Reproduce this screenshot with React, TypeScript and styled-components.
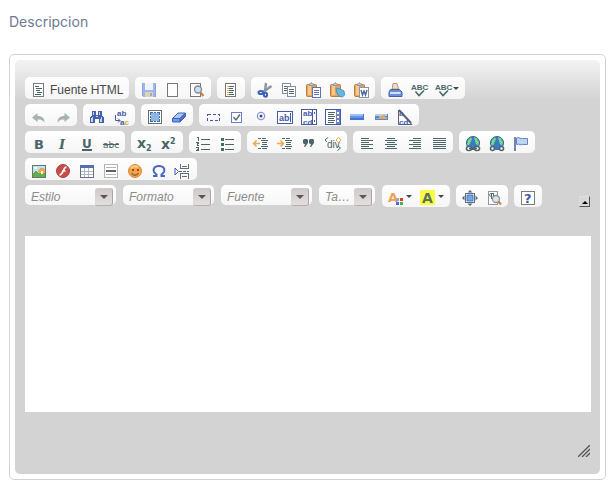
import React from "react";
import styled, { createGlobalStyle, css } from "styled-components";

const GlobalStyle = createGlobalStyle`
  * { box-sizing: border-box; }
  body {
    margin: 0;
    background: #fff;
    font-family: "Liberation Sans", Arial, sans-serif;
  }
`;

const Field = styled.div`
  padding: 12px 7px 17px 9px;
`;

const FieldLabel = styled.label`
  display: block;
  margin-bottom: 22px;
  color: #6c7b8f;
  font-family: Inter, sans-serif;
  font-size: 14px;
  line-height: 20px;
`;

const Frame = styled.div`
  padding: 5px;
  border: 1px solid #d3d3d3;
  border-radius: 5px;
`;

const Skin = styled.div`
  padding: 17px 9px 17px 10px;
  border-radius: 5px;
  background: linear-gradient(to bottom, #fff -15px, #d3d3d3 40px);
`;

const Toolbox = styled.div`
  display: flex;
  align-items: flex-end;
  justify-content: space-between;
  margin-bottom: 29px;
`;

const Rows = styled.div`
  display: flex;
  flex-direction: column;
  gap: 5px;
`;

const Row = styled.div`
  display: flex;
  flex-wrap: wrap;
  gap: 5px 6px;
`;

const Group = styled.div`
  display: flex;
  height: 22px;
  padding: 0 2px;
  border-radius: 5px;
  background: linear-gradient(to bottom, #fff, #d3d3d3 100px);
`;

const ToolButton = styled.button<{ $faded?: boolean }>`
  display: flex;
  align-items: center;
  height: 22px;
  padding: 5px 4px 1px;
  border: 0;
  background: none;
  color: #474747;
  font-family: "Liberation Sans", Arial, sans-serif;
  font-size: 12px;
  line-height: 16px;
  cursor: default;
  ${(p) =>
    p.$faded &&
    css`
      & > svg {
        opacity: 0.6;
      }
    `}
`;

const ButtonText = styled.span`
  padding-left: 3px;
  white-space: nowrap;
`;

const Glyph = styled.svg`
  display: block;
  flex: none;
  width: 16px;
  height: 16px;
  overflow: visible;
`;

const Caret = styled.svg`
  display: block;
  width: 8px;
  height: 16px;
`;

const Combo = styled.div<{ $narrow?: boolean }>`
  display: grid;
  grid-template-columns: 1fr 18px 3px;
  width: ${(p) => (p.$narrow ? 56 : 91)}px;
  height: 20px;
  margin-right: 1px;
  border-radius: 5px;
  background: linear-gradient(to bottom, #fff, #d3d3d3 100px);
`;

const ComboSelect = styled.select`
  grid-area: 1 / 1 / 2 / 4;
  width: 100%;
  height: 24px;
  padding: 0 22px 0 6px;
  border: 0;
  background: none;
  appearance: none;
  color: #8b8b8b;
  font-family: "Liberation Sans", Arial, sans-serif;
  font-size: 12px;
  font-style: italic;
  outline: none;
`;

const ComboArrow = styled.span`
  grid-area: 1 / 2;
  display: flex;
  align-items: center;
  justify-content: center;
  height: 18px;
  margin-top: 3px;
  border-right: 1px solid #aaa5a5;
  border-bottom: 1px solid #b4afaf;
  border-radius: 3px;
  background: linear-gradient(to bottom, #cfc9c9, #e3dfdf);
  pointer-events: none;
`;

const CollapseButton = styled.button`
  display: flex;
  width: 11px;
  height: 11px;
  margin-right: 1px;
  padding: 0;
  border: 1px solid #dedede;
  border-right-color: #555;
  border-bottom-color: #555;
  background: #d8d8d8;
`;

const Editor = styled.textarea`
  display: block;
  width: 100%;
  height: 176px;
  padding: 8px;
  border: 0;
  background: #fff;
  font-family: "Liberation Sans", Arial, sans-serif;
  font-size: 13px;
  resize: none;
  outline: none;
`;

const Footer = styled.div`
  display: flex;
  justify-content: flex-end;
  padding: 33px 1px 0 0;
`;

const Resizer = styled.svg`
  display: block;
  width: 12px;
  height: 12px;
  cursor: nwse-resize;
`;

const sans = "DejaVu Sans, sans-serif";
const arial = "Liberation Sans, Arial, sans-serif";
const teal = "#4b6668";
const navy = "#4659a8";

const lines = (d: string, color = teal) => (
  <path d={d} fill="none" stroke={color} shapeRendering="crispEdges" />
);

const clipboard = (
  <g>
    <rect x="1.5" y="2.5" width="10" height="12" rx="1" fill="#e8a658" stroke="#c07b3a" />
    <path d="M3 3h3v10H3z" fill="#f5c98b" />
    <path d="M4 3.5V2h1.500l1-1.500 1 1.500H9v1.500z" fill="#c8cad6" stroke="#888b9c" strokeWidth=".8" />
  </g>
);

const globe = (
  <g>
    <circle cx="8" cy="7" r="6.500" fill="#3f78c5" stroke="#39637c" />
    <path d="M3 4l3-2.500 1 1-1 3-2 4-2-1zM9 1l3 1.500 2 4-1 3-2-1.500-1-3z" fill="#70dc8f" />
  </g>
);

const spellCheck = (
  <g>
    <text x="0" y="8" fontFamily={arial} fontWeight="bold" fontSize="8" fill={teal}>ABC</text>
    <path d="M4.500 9.500l3.500 4 5-5" fill="none" stroke={teal} strokeWidth="1.600" />
  </g>
);

const icons: Record<string, React.ReactNode> = {
  source: (
    <g shapeRendering="crispEdges">
      <rect x="2.500" y="1.500" width="10" height="13" fill="#fff" stroke="#777d80" />
      {lines("M4 4.500h4M5 6.500h6M5 8.500h4M6 10.500h5M4 12.500h6", "#3f6560")}
    </g>
  ),
  save: (
    <g shapeRendering="crispEdges">
      <path d="M1 1h14v14H2l-1-1z" fill="#5f8bea" />
      <rect x="4" y="1" width="8" height="7" fill="#e9f1fb" />
      <rect x="4" y="10" width="8" height="5" fill="#d5bb8a" />
      <rect x="9" y="11" width="2" height="3" fill="#66779a" />
      <path d="M1 1h1v13H1zM14 2h1v13h-1z" fill="#4668c8" />
    </g>
  ),
  page: <rect x="2.500" y="1.500" width="10" height="13" fill="#fdfdfd" stroke="#777" />,
  preview: (
    <g>
      <rect x="1.500" y="1.500" width="10" height="13" fill="#fff" stroke="#777" />
      <circle cx="9" cy="7.500" r="3.500" fill="#cfdcec" stroke="#7d8896" strokeWidth="1.300" />
      <path d="M11.500 10.500l3 3.500" stroke="#c28648" strokeWidth="2.200" />
    </g>
  ),
  template: (
    <g shapeRendering="crispEdges">
      <rect x="2.500" y="1.500" width="10" height="13" fill="#fff" stroke="#777" />
      {lines("M6 4.500h5M6 6.500h4M6 8.500h5M6 10.500h4M6 12.500h5")}
      {lines("M4 4.500h2M4 6.500h2M4 8.500h2M4 10.500h2M4 12.500h2", "#eeb454")}
    </g>
  ),
  cut: (
    <g fill="none">
      <path d="M9 1L8 9M14.500 4L6 10" stroke="#8995a4" strokeWidth="2.400" />
      <ellipse cx="3.800" cy="10.500" rx="2.300" ry="1.600" stroke="#3a62ba" strokeWidth="2" />
      <ellipse cx="8.500" cy="12.800" rx="1.600" ry="2" stroke="#3a62ba" strokeWidth="2" />
    </g>
  ),
  copy: (
    <g shapeRendering="crispEdges">
      <rect x="1.500" y="1.500" width="8" height="10" fill="#fff" stroke="#869094" />
      {lines("M3 4.500h4M3 6.500h4M3 8.500h4")}
      <rect x="6.500" y="4.500" width="8" height="10" fill="#fff" stroke="#869094" />
      {lines("M8 7.500h5M8 9.500h5M8 11.500h5")}
    </g>
  ),
  paste: (
    <g>
      {clipboard}
      <rect x="7.500" y="5.500" width="8" height="10" fill="#fff" stroke="#6170b8" />
      {lines("M9 8.500h5M9 10.500h5M9 12.500h5", "#6170b8")}
    </g>
  ),
  pasteText: (
    <g>
      {clipboard}
      <path d="M7 6l4 1 4 2 .5 4-2 2-4-1-2-4z" fill="#69b6df" stroke="#4b94bf" />
    </g>
  ),
  pasteWord: (
    <g>
      {clipboard}
      <rect x="6.500" y="5.500" width="9" height="10" fill="#fff" stroke="#8994a7" />
      <path d="M8 8l1.500 5L11 9l1.500 4L14 8" fill="none" stroke="#476997" strokeWidth="1.400" />
    </g>
  ),
  print: (
    <g>
      <path d="M5 8l1-6.500h4L12 8z" fill="#eadac8" stroke="#b89a82" />
      <path d="M3.500 7.500h9L15 10v4.500H2V10z" fill="#6a91df" stroke="#3d62b5" />
      <path d="M3 10h10.500v2H3z" fill="#d1e0f6" />
      <path d="M5 7.500h6" stroke="#62676f" strokeWidth="1.500" />
    </g>
  ),
  spell: spellCheck,
  undo: <path d="M1 8.500L6.500 4v3c5 0 7 2.500 7 6.500-2-2.500-3.500-3-7-3v2.500z" fill="#6c8582" />,
  redo: <path d="M15 8.500L9.500 4v3c-5 0-7 2.500-7 6.500 2-2.500 3.500-3 7-3v2.500z" fill="#6c8582" />,
  find: (
    <g shapeRendering="crispEdges">
      <path d="M3 2h4v4h2V2h4v4l2 3v5h-5v-4H6v4H1V9l2-3z" fill="#4760ac" />
      <path d="M4 3h1v3H4zM3 8h1v5H2V9h1zM10 3h1v3h-1zM12 8h1v5h-2v-3h1zM7 7h2v1H7z" fill="#c2d5f6" />
    </g>
  ),
  replace: (
    <g fontFamily={arial} fontSize="8" fontWeight="bold">
      <text x="4" y="7" fill={navy}>ab</text>
      <path d="M2.500 6v5.500H7M5 9.500l2 2-2 2" fill="none" stroke={navy} />
      <text x="7" y="16" fill={navy}>a<tspan fill="#eda34b">c</tspan></text>
    </g>
  ),
  selectAll: (
    <g shapeRendering="crispEdges">
      <rect x="1.500" y="1.500" width="13" height="13" fill="#fff" stroke="#63706f" />
      <rect x="4" y="4" width="8" height="8" fill="#8ab6ec" />
      <path d="M3 3h3v1H4v2H3zM10 3h3v3h-1V4h-2zM3 10h1v2h2v1H3zM12 10h1v3h-3v-1h2zM7 3h2v1H7zM7 12h2v1H7zM3 7h1v2H3zM12 7h1v2h-1z" fill="#4c67a8" />
    </g>
  ),
  eraser: (
    <g stroke="#4063b8" strokeLinejoin="round">
      <path d="M1.500 9.500L7 4h7.500L9 9.500z" fill="#a9c8f8" />
      <path d="M1.500 9.500H9v3.500H1.500z" fill="#6e98e8" />
      <path d="M9 9.500L14.500 4v3.500L9 13z" fill="#4c74cb" />
    </g>
  ),
  form: (
    <rect x="2.500" y="5.500" width="12" height="6" fill="none" stroke={navy} strokeDasharray="3 2" shapeRendering="crispEdges" />
  ),
  checkbox: (
    <g>
      <rect x="2.500" y="3.500" width="10" height="10" fill="#fff" stroke="#6d7dbe" />
      <path d="M4.500 8l2.500 3 4-5.500" fill="none" stroke="#4c6272" strokeWidth="1.300" />
    </g>
  ),
  radio: (
    <g>
      <circle cx="8" cy="7" r="3.600" fill="#fff" stroke="#8898cb" strokeWidth="1.300" />
      <circle cx="8" cy="7" r="1.500" fill="#35447e" />
    </g>
  ),
  textField: (
    <g>
      <rect x=".5" y="2.500" width="15" height="12" fill="#fff" stroke={navy} />
      <text x="2" y="12" fontFamily={arial} fontWeight="bold" fontSize="9" fill={navy}>ab</text>
      <path d="M13.500 4v9" stroke={navy} shapeRendering="crispEdges" />
    </g>
  ),
  textarea: (
    <g fontFamily={arial} fontWeight="bold" fontSize="8">
      <rect x=".5" y=".5" width="15" height="15" fill="#fff" stroke={navy} />
      <text x="2" y="7" fill={navy}>ab</text>
      <text x="2" y="16" fill={navy}>cd</text>
      <path d="M11.500 1v14M13.500 3v2M13.500 11v2" stroke={navy} shapeRendering="crispEdges" />
    </g>
  ),
  select: (
    <g shapeRendering="crispEdges">
      <rect x=".5" y=".5" width="15" height="15" fill="#fff" stroke={navy} />
      {lines("M3 3.500h7M3 5.500h6M3 7.500h7M3 9.500h6M3 11.500h7M3 13.500h6", "#53616d")}
      <path d="M11 1h4v14h-4z" fill="#7185c5" />
      <path d="M12 3h2v2h-2zM12 7h2v2h-2zM12 11h2v2h-2z" fill="#fff" />
    </g>
  ),
  button: (
    <g shapeRendering="crispEdges">
      <path d="M1 5h14v6H1z" fill="#4773d0" />
      <path d="M1 5h13v2H1z" fill="#9bc2f4" />
      <path d="M1 7h13v2H1z" fill="#6694e4" />
    </g>
  ),
  imageButton: (
    <g shapeRendering="crispEdges">
      <path d="M2 5h13v6H2z" fill="#5a86d8" />
      <path d="M2 5h12v2H2z" fill="#b5d2f6" />
      <path d="M6 7h3V6h3v2h2v2H7z" fill="#e0a862" />
      <path d="M3 9h4v1H3z" fill="#8bbd85" />
    </g>
  ),
  hidden: (
    <g fontFamily={arial} fontWeight="bold" fontSize="8">
      <path d="M1.500 1v14.500H15z" fill="#fff" stroke="#56657a" />
      <text x="2" y="7" fill={navy}>a</text>
      <text x="2" y="16" fill={navy}>cd</text>
      <path d="M2 1l12 13" stroke="#56657a" strokeWidth="2" />
    </g>
  ),
  bold: <text x="3" y="13" fontFamily={sans} fontWeight="bold" fontSize="13" fill={teal}>B</text>,
  italic: (
    <text x="4" y="13" fontFamily="DejaVu Serif, serif" fontWeight="bold" fontStyle="italic" fontSize="13" fill={teal}>I</text>
  ),
  underline: (
    <g>
      <text x="3" y="12" fontFamily={sans} fontWeight="bold" fontSize="12" fill={teal}>U</text>
      <path d="M3 14h10" stroke={teal} strokeWidth="2" />
    </g>
  ),
  strike: (
    <g>
      <text x="0" y="12" fontFamily={sans} fontSize="9" fill={teal}>abc</text>
      {lines("M0 8.500h16")}
    </g>
  ),
  sub: (
    <g fill={teal} fontFamily={sans} fontWeight="bold">
      <text x="0" y="12" fontSize="14">x</text>
      <text x="9" y="15" fontSize="8">2</text>
    </g>
  ),
  sup: (
    <g fill={teal} fontFamily={sans} fontWeight="bold">
      <text x="0" y="13" fontSize="14">x</text>
      <text x="9" y="8" fontSize="8">2</text>
    </g>
  ),
  numbers: (
    <g shapeRendering="crispEdges">
      {lines("M6 3.500h9M6 8.500h9M6 13.500h9")}
      {lines("M2 1.500h1.500v3M1 6.500h2.500v1H2v2h2M1 11.500h2.500v3H1M2 13.500h1")}
    </g>
  ),
  bullets: (
    <g shapeRendering="crispEdges">
      {lines("M6 3.500h9M6 8.500h9M6 13.500h9")}
      <path d="M2 2h3v3H2zM2 7h3v3H2zM2 12h3v3H2z" fill={teal} />
    </g>
  ),
  outdent: (
    <g>
      {lines("M5 2.500h3M9 2.500h4M8 4.500h7M9 6.500h5M9 8.500h5M8 10.500h7M5 12.500h3M9 12.500h5")}
      <path d="M0 7.500h7M3.500 4.500l-3 3 3 3" fill="none" stroke="#efaa51" strokeWidth="1.600" />
    </g>
  ),
  indent: (
    <g>
      {lines("M5 2.500h3M9 2.500h4M8 4.500h7M9 6.500h5M9 8.500h5M8 10.500h7M5 12.500h3M9 12.500h5")}
      <path d="M0 7.500h6M3.500 4.500l3 3-3 3" fill="none" stroke="#efaa51" strokeWidth="1.600" />
    </g>
  ),
  quote: (
    <path d="M3 3h3l1 1v3l-3 4H3l1-3H3L2 7V4zM9 3h3l1 1v3l-3 4H9l1-3H9L8 7V4z" fill={teal} />
  ),
  div: (
    <g>
      <text x="2" y="12" fontFamily={arial} fontSize="10" fill={teal}>div</text>
      <path d="M3 1.500l-3 2.500 2 2M13 10l2.500 2-3 2.500" fill="none" stroke={teal} />
      <path d="M13.500 1.500L16 4l-2.500 2.500L11 4z" fill="#fff" stroke="#efaa51" />
    </g>
  ),
  left: lines("M2 2.500h8M2 4.500h12M2 6.500h8M2 8.500h12M2 10.500h8M2 12.500h12"),
  center: lines("M4 2.500h8M2 4.500h12M4 6.500h8M2 8.500h12M4 10.500h8M2 12.500h12"),
  right: lines("M6 2.500h8M2 4.500h12M6 6.500h8M2 8.500h12M6 10.500h8M2 12.500h12"),
  justify: lines("M2 2.500h13M2 4.500h13M2 6.500h13M2 8.500h13M2 10.500h13M2 12.500h13"),
  link: (
    <g>
      {globe}
      <rect x="1.500" y="10.500" width="5" height="4" rx="2" fill="#fff" stroke={teal} strokeWidth="1.600" />
      <rect x="9.500" y="10.500" width="5" height="4" rx="2" fill="#fff" stroke={teal} strokeWidth="1.600" />
      <path d="M4 12.500h8" stroke={teal} strokeWidth="1.600" />
    </g>
  ),
  unlink: (
    <g>
      {globe}
      <rect x="1.500" y="10.500" width="4" height="4" rx="2" fill="#fff" stroke={teal} strokeWidth="1.600" />
      <rect x="10.500" y="10.500" width="4" height="4" rx="2" fill="#fff" stroke={teal} strokeWidth="1.600" />
    </g>
  ),
  anchor: (
    <g>
      <path d="M2 1v14" stroke="#7084b8" strokeWidth="2" />
      <path d="M3.500 2c3-1.500 4 1.500 6 .5h5v6h-5c-2 1-3-1-6 0z" fill="#bdd5f2" stroke="#6a83bf" />
    </g>
  ),
  image: (
    <g shapeRendering="crispEdges">
      <rect x="1.500" y="2.500" width="13" height="12" fill="#bae6fb" stroke="#67766c" />
      <path d="M2 10l3-2 2 2 3-3 4 3v4H2z" fill="#63ad50" />
      <path d="M7 7l2-2h3l2 2v3H8z" fill="#efa455" />
      <path d="M10 8h2v3h-2zM3 4h3v2H3z" fill="#fff7cf" />
    </g>
  ),
  flash: (
    <g>
      <circle cx="8" cy="8" r="6.500" fill="#c94c48" stroke="#a84240" />
      <path d="M11.500 4C8 4 8.500 12 4.500 12M7 8h3.500" fill="none" stroke="#fff" strokeWidth="1.700" />
    </g>
  ),
  table: (
    <g shapeRendering="crispEdges">
      <rect x="1.500" y="2.500" width="13" height="12" fill="#fff" stroke="#657083" />
      <path d="M1 2h14v3H1z" fill="#546eae" />
      {lines("M2 8.500h12M2 11.500h12M5.500 5v9M9.500 5v9", "#aeb8c5")}
    </g>
  ),
  rule: (
    <g shapeRendering="crispEdges">
      <rect x="1.500" y="1.500" width="13" height="13" fill="#fff" stroke="#b4b4b4" />
      {lines("M3 4.500h10M3 11.500h10", "#b4b4b4")}
      <path d="M3 7h10v2H3z" fill="#596563" />
    </g>
  ),
  smiley: (
    <g>
      <circle cx="8" cy="8" r="6.500" fill="#f4a346" stroke="#dc8944" />
      <path d="M4 5c2-2 5-2 7-1" stroke="#ffd188" strokeWidth="2" fill="none" />
      <path d="M5 6h2v2H5zM10 6h2v2h-2z" fill="#8c4d31" />
      <path d="M4.500 10c2 3 5 3 7 0" fill="none" stroke="#9b5432" strokeWidth="1.300" />
    </g>
  ),
  omega: (
    <path d="M2 13h3.500v-1.500C.5 8 2.500 3 8 3s7.500 5 2.500 8.500V13H14" fill="none" stroke="#4869bf" strokeWidth="2" />
  ),
  pageBreak: (
    <g shapeRendering="crispEdges">
      {lines("M5.500 1v4.500h8V1M5.500 15.500v-5h8v5M7 3.500h5M7 13.500h5", "#63706f")}
      {lines("M4 8.500h3M8 8.500h3M12 8.500h2")}
      <path d="M0 5l3.500 3.500L0 12z" fill="#fff" stroke={navy} shapeRendering="auto" />
    </g>
  ),
  textColor: (
    <g>
      <text x="0" y="12" fontFamily={sans} fontWeight="bold" fontSize="13" fill="#efa259">A</text>
      <path d="M8 8h3v3H8z" fill="#a9a0b8" />
      <path d="M12 8h3v3h-3z" fill="#d0403a" />
      <path d="M8 12h3v3H8z" fill="#3f70dc" />
      <path d="M12 12h3v3h-3z" fill="#4db045" />
    </g>
  ),
  bgColor: (
    <g>
      <path d="M0 0h15v15H0z" fill="#fbfb45" />
      <text x="2" y="13" fontFamily={sans} fontWeight="bold" fontSize="14" fill="#5b7355">A</text>
    </g>
  ),
  maximize: (
    <g>
      <rect x="3.500" y="3.500" width="9" height="9" fill="#fff" stroke="#5c7178" />
      <path d="M5 5h6v6H5z" fill="#75a4ed" stroke="#4774cb" />
      <path d="M8 0l2.500 2.500h-5zM8 16l2.500-2.500h-5zM0 8l2.500-2.500v5zM16 8l-2.500-2.500v5z" fill="#536e75" />
    </g>
  ),
  blocks: (
    <g>
      <rect x="2.500" y="1.500" width="9" height="13" fill="#fff" stroke="#92999a" />
      <path d="M7.500 9V3.500M5.500 9V3.500M8 3.500H5c-2 0-2 3 .5 3" fill="none" stroke="#53656a" />
      <circle cx="10" cy="9" r="3.500" fill="#dce4e6" stroke="#8b9497" strokeWidth="1.300" />
      <path d="M12.500 11.500l2.500 3" stroke="#c28648" strokeWidth="2.200" />
    </g>
  ),
  about: (
    <g>
      <rect x="1.500" y="1.500" width="13" height="13" fill="#fff" stroke="#77807e" />
      <text x="4" y="13" fontFamily={sans} fontWeight="bold" fontSize="13" fill={navy}>?</text>
    </g>
  ),
};

type Tool = { icon: string; label: string; text?: string; menu?: boolean; faded?: boolean };
const t = (icon: string, label: string, extra: Partial<Tool> = {}): Tool => ({ icon, label, ...extra });

const toolbar: Tool[][][] = [
  [
    [t("source", "Fuente HTML", { text: "Fuente HTML" })],
    [t("save", "Guardar", { faded: true }), t("page", "Nueva página"), t("preview", "Vista previa")],
    [t("template", "Plantillas")],
    [t("cut", "Cortar"), t("copy", "Copiar"), t("paste", "Pegar"), t("pasteText", "Pegar como texto plano"), t("pasteWord", "Pegar desde Word")],
    [t("print", "Imprimir"), t("spell", "Ortografía"), t("spell", "Corregir mientras escribe", { menu: true })],
  ],
  [
    [t("undo", "Deshacer", { faded: true }), t("redo", "Rehacer", { faded: true })],
    [t("find", "Buscar"), t("replace", "Reemplazar")],
    [t("selectAll", "Seleccionar todo"), t("eraser", "Eliminar formato")],
    [t("form", "Formulario"), t("checkbox", "Casilla de verificación"), t("radio", "Botón de opción"), t("textField", "Campo de texto"), t("textarea", "Área de texto"), t("select", "Lista de selección"), t("button", "Botón"), t("imageButton", "Botón de imagen"), t("hidden", "Campo oculto")],
  ],
  [
    [t("bold", "Negrita"), t("italic", "Cursiva"), t("underline", "Subrayado"), t("strike", "Tachado")],
    [t("sub", "Subíndice"), t("sup", "Superíndice")],
    [t("numbers", "Numeración"), t("bullets", "Viñetas")],
    [t("outdent", "Disminuir sangría"), t("indent", "Aumentar sangría"), t("quote", "Cita"), t("div", "Crear contenedor")],
    [t("left", "Alinear a la izquierda"), t("center", "Centrar"), t("right", "Alinear a la derecha"), t("justify", "Justificar")],
    [t("link", "Insertar vínculo"), t("unlink", "Eliminar vínculo"), t("anchor", "Ancla")],
  ],
  [
    [t("image", "Imagen"), t("flash", "Flash"), t("table", "Tabla"), t("rule", "Línea horizontal"), t("smiley", "Emoticonos"), t("omega", "Carácter especial"), t("pageBreak", "Salto de página")],
  ],
];

const formatTools: Tool[][] = [
  [t("textColor", "Color de texto", { menu: true }), t("bgColor", "Color de fondo", { menu: true })],
  [t("maximize", "Maximizar"), t("blocks", "Mostrar bloques")],
  [t("about", "Acerca de")],
];

const combos = [
  { label: "Estilo", shown: "Estilo" },
  { label: "Formato", shown: "Formato" },
  { label: "Fuente", shown: "Fuente" },
  { label: "Tamaño", shown: "Ta…", narrow: true },
];

function ToolGroup({ tools }: { tools: Tool[] }) {
  return (
    <Group role="group">
      {tools.map((tool) => (
        <ToolButton key={tool.label} type="button" aria-label={tool.label} $faded={tool.faded} disabled={tool.faded}>
          <Glyph viewBox="0 0 16 16" aria-hidden="true">{icons[tool.icon]}</Glyph>
          {tool.text && <ButtonText>{tool.text}</ButtonText>}
          {tool.menu && (
            <Caret viewBox="0 0 8 16" aria-hidden="true">
              <path d="M2 5h6L5 8z" fill="#474747" />
            </Caret>
          )}
        </ToolButton>
      ))}
    </Group>
  );
}

export default function App() {
  return (
    <>
      <GlobalStyle />
      <Field>
        <FieldLabel htmlFor="descripcion">Descripcion</FieldLabel>
        <Frame>
          <Skin>
            <Toolbox>
              <Rows role="toolbar" aria-label="Barra de herramientas">
                {toolbar.map((groups, i) => (
                  <Row key={i}>
                    {groups.map((tools) => <ToolGroup key={tools[0].label} tools={tools} />)}
                  </Row>
                ))}
                <Row>
                  {combos.map((combo) => (
                    <Combo key={combo.label} $narrow={combo.narrow}>
                      <ComboSelect aria-label={combo.label}>
                        <option>{combo.shown}</option>
                      </ComboSelect>
                      <ComboArrow>
                        <svg width="8" height="4" viewBox="0 0 8 4" aria-hidden="true">
                          <path d="M0 0h8L4 4z" fill="#5b5656" />
                        </svg>
                      </ComboArrow>
                    </Combo>
                  ))}
                  {formatTools.map((tools) => <ToolGroup key={tools[0].label} tools={tools} />)}
                </Row>
              </Rows>
              <CollapseButton type="button" aria-label="Contraer barra">
                <svg width="9" height="9" viewBox="0 0 9 9" aria-hidden="true">
                  <path d="M2 7h6L5 4z" fill="#000" />
                </svg>
              </CollapseButton>
            </Toolbox>
            <Editor id="descripcion" />
            <Footer>
              <Resizer viewBox="0 0 12 12" aria-hidden="true">
                <path d="M0 12L12 0M4 12l8-8M8 12l4-4" stroke="#555" strokeWidth="1.300" />
              </Resizer>
            </Footer>
          </Skin>
        </Frame>
      </Field>
    </>
  );
}
